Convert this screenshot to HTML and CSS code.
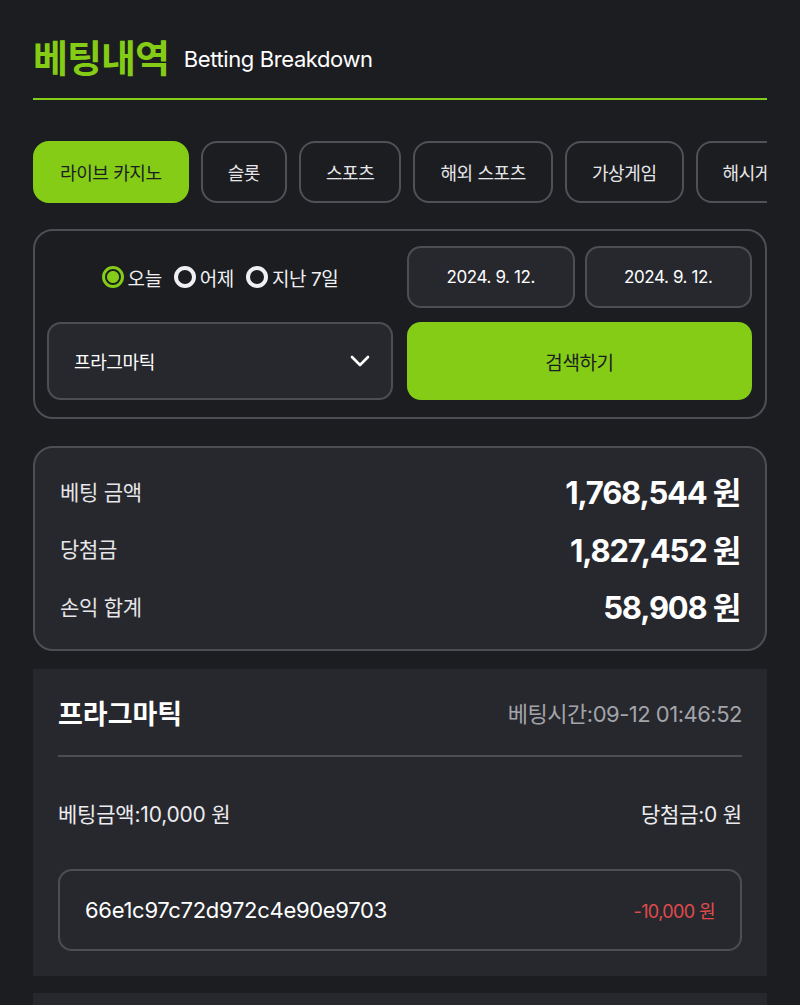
FILE: index.html
```html
<!DOCTYPE html>
<html lang="ko">
<head>
<meta charset="utf-8">
<link rel="stylesheet" href="styles.css">
</head>
<body>
<div class="page">
  <header class="head">
    <h1 class="title">베팅내역</h1>
    <span class="subtitle">Betting Breakdown</span>
  </header>

  <nav class="tabs">
    <button class="tab active">라이브 카지노</button>
    <button class="tab">슬롯</button>
    <button class="tab">스포츠</button>
    <button class="tab">해외 스포츠</button>
    <button class="tab">가상게임</button>
    <button class="tab">해시게임</button>
  </nav>

  <section class="filter">
    <div class="radios">
      <label class="radio"><span class="dot on"></span>오늘</label>
      <label class="radio"><span class="dot"></span>어제</label>
      <label class="radio"><span class="dot"></span>지난 7일</label>
    </div>
    <div class="dates">
      <div class="date">2024. 9. 12.</div>
      <div class="date">2024. 9. 12.</div>
    </div>
    <div class="select">
      <span>프라그마틱</span>
      <svg class="chev" width="20" height="12" viewBox="0 0 20 12"><path d="M2 2 L10 10 L18 2" fill="none" stroke="#fff" stroke-width="2.6" stroke-linecap="round" stroke-linejoin="round"/></svg>
    </div>
    <button class="search">검색하기</button>
  </section>

  <section class="summary">
    <div class="srow"><span class="slabel">베팅 금액</span><span class="sval">1,768,544 원</span></div>
    <div class="srow"><span class="slabel">당첨금</span><span class="sval">1,827,452 원</span></div>
    <div class="srow"><span class="slabel">손익 합계</span><span class="sval">58,908 원</span></div>
  </section>

  <article class="card">
    <div class="card-head">
      <span class="card-title">프라그마틱</span>
      <span class="card-time">베팅시간:09-12 01:46:52</span>
    </div>
    <div class="card-amts">
      <span>베팅금액:10,000 원</span>
      <span>당첨금:0 원</span>
    </div>
    <div class="tx">
      <span class="tx-id">66e1c97c72d972c4e90e9703</span>
      <span class="tx-amt">-10,000 원</span>
    </div>
  </article>
  <article class="card next"></article>
</div>
</body>
</html>
```

FILE: styles.css
```css
* { box-sizing: border-box; }
html, body { margin: 0; padding: 0; }
body {
  background: #1c1d21;
  color: #fff;
  font-family: Inter, "Noto Sans CJK KR", sans-serif;
  height: 1005px;
  overflow: hidden;
}
.page { padding: 0 33px; }

.head {
  display: flex;
  align-items: center;
  gap: 15px;
  padding-top: 36px;
  padding-bottom: 18px;
  border-bottom: 2px solid #84cc16;
}
.title {
  margin: 0;
  color: #84cc16;
  font-size: 38px;
  font-weight: 700;
  line-height: 44px;
  letter-spacing: -1px;
}
.subtitle {
  font-size: 22px;
  color: #fff;
  letter-spacing: -0.4px;
  padding-top: 2px;
}

.tabs {
  display: flex;
  gap: 12px;
  margin-top: 41px;
  overflow: hidden;
}
.tab {
  flex: none;
  height: 62px;
  padding: 0 25px;
  border: 2px solid #505157;
  border-radius: 16px;
  background: transparent;
  color: #e6e6e8;
  font-family: inherit;
  font-size: 18px;
  letter-spacing: -0.4px;
}
.tab.active {
  background: #84cc16;
  border-color: #84cc16;
  color: #1c1d21;
}

.filter {
  margin-top: 26px;
  border: 2px solid #4d4e54;
  border-radius: 20px;
  padding: 15px 13px 17px 12px;
  display: grid;
  grid-template-columns: 346px 1fr;
  grid-template-rows: 62px 78px;
  column-gap: 14px;
  row-gap: 14px;
}
.radios {
  display: flex;
  align-items: center;
  justify-content: center;
  gap: 12px;
  font-size: 19px;
  color: #f0f0f2;
  letter-spacing: -0.4px;
}
.radio { display: flex; align-items: center; gap: 4px; }
.dot {
  width: 22px;
  height: 22px;
  border-radius: 50%;
  border: 4px solid #f0f0f2;
  display: inline-block;
}
.dot.on {
  border-color: #84cc16;
  background: radial-gradient(circle, #84cc16 0 5.5px, #1c1d21 6.5px);
  border-width: 3px;
}
.dates { display: grid; grid-template-columns: 1fr 1fr; gap: 10px; }
.date {
  display: flex;
  align-items: center;
  justify-content: center;
  background: #27282e;
  border: 2px solid #4d4e54;
  border-radius: 14px;
  font-size: 17px;
  letter-spacing: -0.4px;
}
.select {
  display: flex;
  align-items: center;
  justify-content: space-between;
  background: #27282e;
  border: 2px solid #4d4e54;
  border-radius: 14px;
  padding: 0 21px 0 25px;
  font-size: 18px;
  letter-spacing: -0.4px;
}
.search {
  background: #84cc16;
  border: none;
  border-radius: 14px;
  color: #1c1d21;
  font-family: inherit;
  font-size: 19px;
  letter-spacing: -0.4px;
}

.summary {
  margin-top: 27px;
  background: #27282e;
  border: 2px solid #4d4e54;
  border-radius: 20px;
  padding: 14px 25px 14.5px;
  display: flex;
  flex-direction: column;
}
.srow {
  display: flex;
  justify-content: space-between;
  align-items: center;
  height: 57.5px;
}
.slabel { font-size: 21px; color: #e6e6e8; letter-spacing: -0.3px; }
.sval { font-size: 31px; font-weight: 700; letter-spacing: -1.2px; }

.card {
  margin-top: 18px;
  background: #27282e;
  padding: 0 25px 25px;
}
.card-head {
  display: flex;
  justify-content: space-between;
  align-items: center;
  height: 88px;
  border-bottom: 2px solid #4d4e54;
}
.card-title { font-size: 27px; font-weight: 700; letter-spacing: 0; }
.card-time { font-size: 22px; color: #a3a4a9; letter-spacing: -0.5px; }
.card-amts {
  display: flex;
  justify-content: space-between;
  align-items: center;
  height: 112px;
  font-size: 21px;
  color: #ececee;
  letter-spacing: -0.2px;
}
.tx {
  display: flex;
  justify-content: space-between;
  align-items: center;
  height: 82px;
  border: 2px solid #4d4e54;
  border-radius: 14px;
  padding: 0 25px 0 25px;
}
.tx-id { font-size: 22px; letter-spacing: -0.3px; }
.tx-amt { font-size: 18px; color: #e04b4b; letter-spacing: -0.6px; }
.card.next { margin-top: 17px; height: 60px; padding: 0; }
```
